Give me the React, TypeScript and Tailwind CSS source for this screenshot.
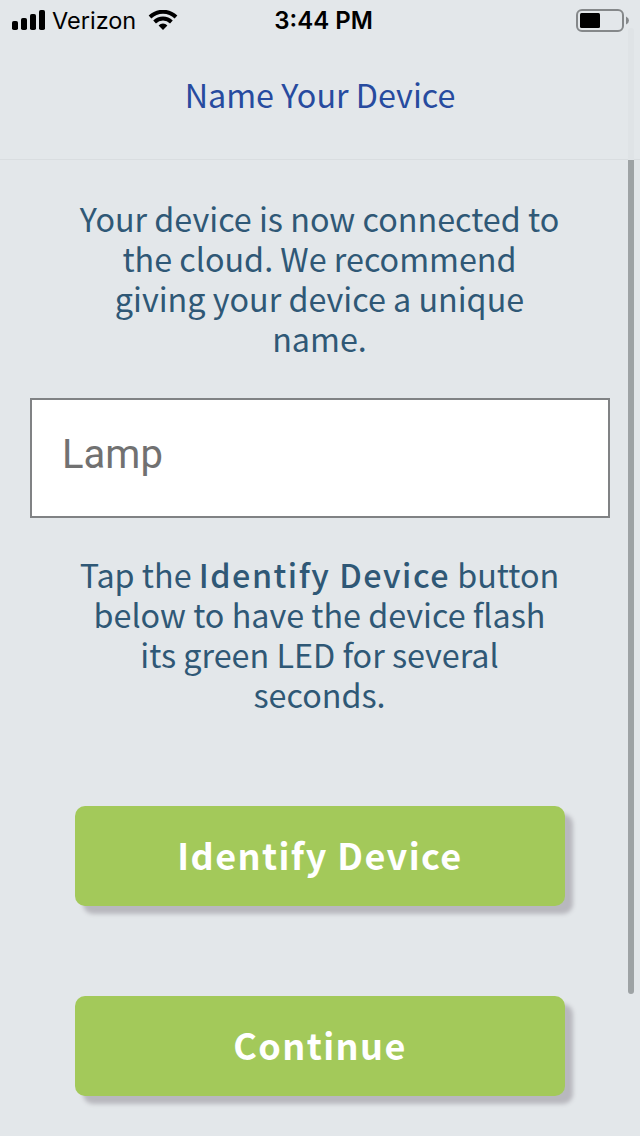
import { useState } from "react";

const StatusBar: React.FC = () => (
    <div className="grid h-10 grid-cols-[1fr_auto_1fr] items-center pl-3 pr-[11px] font-['Inter',sans-serif] text-black">
        <div className="flex items-center">
            <svg width="33" height="20" viewBox="0 0 33 20" fill="black">
                <rect x="0" y="11" width="6" height="9" rx="1.8" />
                <rect x="9" y="8" width="6" height="12" rx="1.8" />
                <rect x="18" y="4" width="6" height="16" rx="1.8" />
                <rect x="27" y="0" width="6" height="20" rx="1.8" />
            </svg>
            <span className="ml-[7px] pt-0.5 text-[23.5px] leading-[38px]">Verizon</span>
            <svg className="ml-3" width="30" height="20" viewBox="0 0 30 20" fill="none" stroke="black" strokeWidth="3.9">
                <path d="M2 7a18.6 18.6 0 0 1 26 0" />
                <path d="M6.6 12a12 12 0 0 1 16.8 0" />
                <path d="M15 20l-4.4-4.6a6.3 6.3 0 0 1 8.8 0z" fill="black" stroke="none" />
            </svg>
        </div>
        <span className="pt-0.5 pl-1.5 text-2xl leading-[38px] font-semibold">3:44 PM</span>
        <svg className="justify-self-end" width="53" height="23" viewBox="0 0 53 23">
            <rect x="1" y="1" width="46" height="21" rx="5" fill="none" stroke="#85888a" strokeWidth="2" />
            <rect x="4" y="4" width="20" height="15" rx="1.5" fill="black" />
            <path d="M50 7.5q3 1.5 3 4t-3 4z" fill="#85888a" />
        </svg>
    </div>
);

interface ButtonProps {
    children: React.ReactNode;
    onClick?: () => void;
}

const Button: React.FC<ButtonProps> = ({ children, onClick }) => (
    <button onClick={onClick} className="h-[100px] w-[490px] rounded-[10px] bg-[#a3c95a] pb-1 text-[36px] font-bold tracking-[1.4px] text-white shadow-[8px_8px_4px_#b8b8be]">
        {children}
    </button>
);

export default function App() {

    const [name, setName] = useState("");

    return (
        <div className="relative h-[1136px] w-[640px] overflow-hidden bg-[#e3e7ea] font-['Noto_Sans_CJK_SC',sans-serif] text-[#2f5876]">
            <header className="h-40 border-b border-[#d9dde0]">
                <StatusBar />
                <h1 className="mt-9 text-center text-[32.3px] leading-9 text-[#274b9f]">Name Your Device</h1>
            </header>

            <main className="flex flex-col items-center">
                <p className="mt-[38px] pr-px text-center text-[32.3px] leading-10">
                    Your device is now connected to<br />
                    the cloud. We recommend<br />
                    giving your device a unique<br />
                    name.
                </p>

                <input
                    type="text"
                    aria-label="Device name"
                    placeholder="Lamp"
                    value={name}
                    onChange={e => setName(e.target.value)}
                    className="mt-10 h-[120px] w-[580px] border-2 border-[#808284] bg-white px-[30px] pb-2 font-['Roboto',sans-serif] text-[40px] text-black placeholder:text-[#717171]"
                />

                <p className="mt-9 pr-px text-center text-[32.3px] leading-10">
                    Tap the <strong className="font-medium tracking-[1.5px]">Identify Device</strong> button<br />
                    below to have the device flash<br />
                    its green LED for several<br />
                    seconds.
                </p>

                <div className="mt-[92px] flex flex-col gap-[90px]">
                    <Button>Identify Device</Button>
                    <Button>Continue</Button>
                </div>
            </main>

            {/* scroll indicator, faded where it runs under the header */}
            <div className="absolute top-7 left-[628px] h-[132px] w-1.5 rounded-t-full bg-[#dfe3e6]" />
            <div className="absolute top-40 left-[628px] h-[834px] w-1.5 rounded-b-full bg-[#9ea3a5]" />
        </div>
    );
}
